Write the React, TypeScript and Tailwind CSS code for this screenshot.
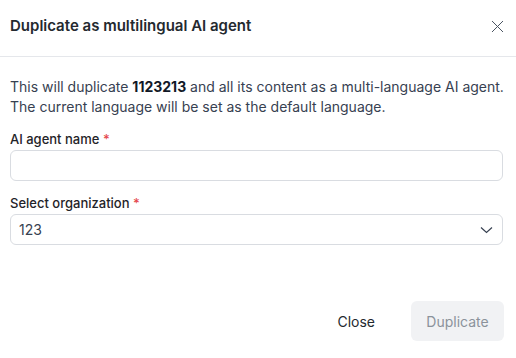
import React from "react";

const App = () => {
  return (
    <div
      className="flex h-[358px] w-[516px] flex-col bg-white text-[#1f2328]"
      style={{ fontFamily: "Inter, 'Noto Sans', sans-serif" }}
    >
      <div className="flex h-[57px] items-center justify-between border-b border-[#e5e7eb] pl-[10px] pr-[12px] pb-[4px]">
        <h2 className="text-[15px] font-semibold text-[#24292f]">Duplicate as multilingual AI agent</h2>
        <button className="text-[#4b5563]">
          <svg width="13" height="13" viewBox="0 0 13 13" fill="none" stroke="currentColor" strokeWidth="1">
            <path d="M1 1l11 11M12 1L1 12" />
          </svg>
        </button>
      </div>
      <div className="flex flex-col pl-[10px] pr-[13px] pt-[20px]">
        <p className="whitespace-nowrap text-[14px] leading-[20px] text-[#374151]">
          This will duplicate <span className="font-bold text-[#111827]">1123213</span> and all its content as a
          multi-language AI agent.
          <br />
          The current language will be set as the default language.
        </p>
        <label className="mt-[13px] text-[13px] font-medium leading-[18px] text-[#1f2328]">
          AI agent name <span className="text-[#e5484d]">*</span>
        </label>
        <input className="mt-[2px] h-[31px] w-full rounded-[6px] border border-[#d9dce1] px-[10px] text-[14px] outline-none" />
        <label className="mt-[13px] text-[13px] font-medium leading-[18px] text-[#1f2328]">
          Select organization <span className="text-[#e5484d]">*</span>
        </label>
        <div className="mt-[2px] flex h-[31px] w-full items-center justify-between rounded-[6px] border border-[#d9dce1] pl-[8px] pr-[9px] text-[14px] text-[#374151]">
          <span>123</span>
          <svg width="13" height="8" viewBox="0 0 13 8" fill="none" stroke="#374151" strokeWidth="1.2">
            <path d="M1 1.5l5.5 5 5.5-5" />
          </svg>
        </div>
      </div>
      <div className="mt-auto flex items-center justify-end gap-[10px] px-[12px] pb-[17px]">
        <button className="h-[40px] px-[26px] text-[14px] text-[#24292f]">Close</button>
        <button className="h-[40px] w-[93px] rounded-[6px] bg-[#f1f2f4] text-[14px] text-[#8b929b]">Duplicate</button>
      </div>
    </div>
  );
};

export default App;
